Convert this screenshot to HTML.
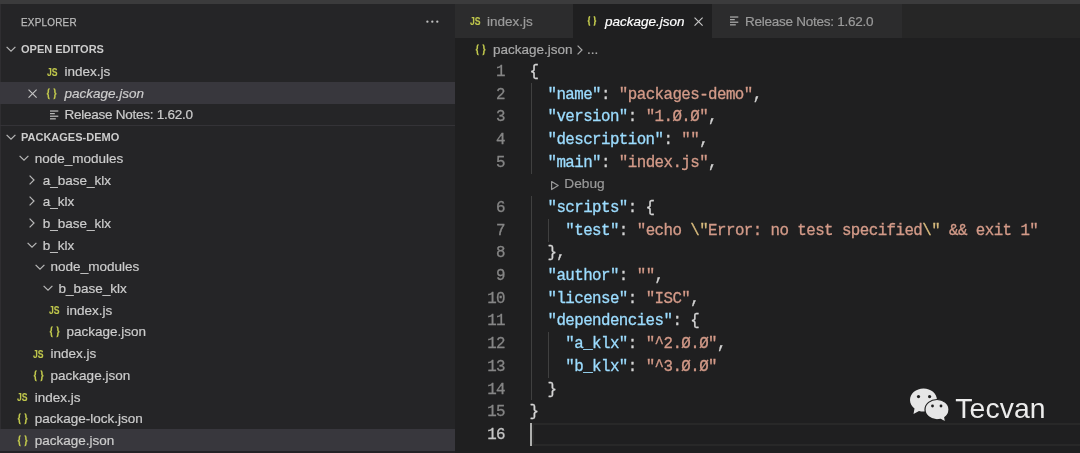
<!DOCTYPE html>
<html><head><meta charset="utf-8">
<style>
*{margin:0;padding:0;box-sizing:border-box}
html,body{width:1080px;height:453px;overflow:hidden;background:#1f1f20}
body{position:relative;font-family:"Liberation Sans",sans-serif;}
.a{position:absolute;white-space:pre}
.t{font-size:13.5px;letter-spacing:0px;color:#cccccc;line-height:16px;-webkit-text-stroke:0.2px currentColor}
.rn{letter-spacing:-0.25px}
.hd{font-size:11px;font-weight:bold;color:#cccccc;line-height:16px}
.js{font-family:"Liberation Sans",sans-serif;font-weight:bold;font-size:10.3px;line-height:11px;color:#bfc64c;transform:scaleX(0.84);transform-origin:0 0;-webkit-text-stroke:0.1px #bfc64c}
.code{-webkit-text-stroke:0.3px currentColor;font-family:"Liberation Mono",monospace;font-size:15.8px;letter-spacing:-0.5570px;line-height:22.69px;color:#d4d4d4}
.ln{-webkit-text-stroke:0.3px currentColor;font-family:"Liberation Mono",monospace;font-size:15.8px;letter-spacing:-0.5570px;line-height:22.69px;color:#858585;text-align:right;width:60px}
.k{color:#9cdcfe}.s{color:#d39a88}.e{color:#d7ba7d}
</style></head><body><div id="root" style="position:absolute;left:0;top:0;width:1080px;height:453px;overflow:hidden;background:#1f1f20;will-change:transform">

<div class="a" style="left:0;top:0;width:1080px;height:4px;background:#3b3b3c"></div>
<div class="a" style="left:0;top:4px;width:455px;height:449px;background:#252527"></div>
<div class="a" style="left:0;top:4px;width:1px;height:449px;background:#2f2e31"></div>
<div class="a" style="left:455px;top:4px;width:625px;height:34px;background:#262626"></div>
<div class="a" style="left:21px;top:14px;font-size:11px;line-height:16px;letter-spacing:0.27px;transform:scaleX(0.9);transform-origin:0 0;-webkit-text-stroke:0.25px currentColor;color:#bbbbbb">EXPLORER</div>
<svg class="a" style="left:424px;top:18px" width="18" height="6" viewBox="0 0 18 6"><circle cx="3.4" cy="3.65" r="1.15" fill="#c0c0c0"/><circle cx="8.3" cy="3.65" r="1.15" fill="#c0c0c0"/><circle cx="13.3" cy="3.65" r="1.15" fill="#c0c0c0"/></svg>
<svg class="a" style="left:2.8px;top:40.8px" width="16" height="16" viewBox="0 0 16 16"><path d="M3.6 5.8 L8 10.2 L12.4 5.8" fill="none" stroke="#b8b8b8" stroke-width="1.2"/></svg>
<div class="a hd" style="left:21px;top:41.4px">OPEN EDITORS</div>
<div class="a js" style="left:46.7px;top:66.5px">JS</div>
<div class="a t" style="left:64.5px;top:64.0px">index.js</div>
<div class="a" style="left:0;top:81.9px;width:455px;height:21.7px;background:#38373d"></div>
<svg class="a" style="left:28px;top:88.5px" width="9.2" height="9.2" viewBox="0 0 10 10"><path d="M0.6 0.6 L9.4 9.4 M9.4 0.6 L0.6 9.4" stroke="#c5c5c5" stroke-width="1.25" fill="none"/></svg>
<svg class="a" style="left:46.4px;top:87.7px" width="12.0" height="12.0" viewBox="0 0 12 12"><path d="M3.6 0.8 C2.6 0.8 2.3 1.3 2.3 2.6 L2.3 4.2 C2.3 5.1 1.9 5.6 0.8 5.7 C1.9 5.8 2.3 6.3 2.3 7.2 L2.3 8.8 C2.3 10.1 2.6 10.6 3.6 10.6 M7.6 0.8 C8.6 0.8 8.9 1.3 8.9 2.6 L8.9 4.2 C8.9 5.1 9.3 5.6 10.4 5.7 C9.3 5.8 8.9 6.3 8.9 7.2 L8.9 8.8 C8.9 10.1 8.6 10.6 7.6 10.6" fill="none" stroke="#bfc64c" stroke-width="1.550"/></svg>
<div class="a t" style="left:64.5px;top:85.7px;font-style:italic">package.json</div>
<svg class="a" style="left:49.8px;top:109.89999999999999px" width="10" height="10" viewBox="0 0 10 10"><rect x="0" y="0.4" width="8.3" height="1.25" fill="#b8b8b8"/><rect x="0" y="3.0" width="4.8" height="1.25" fill="#b8b8b8"/><rect x="0" y="5.6" width="8.3" height="1.25" fill="#b8b8b8"/><rect x="0" y="8.2" width="5.8" height="1.25" fill="#b8b8b8"/></svg>
<div class="a t rn" style="left:64.5px;top:107.39999999999999px">Release Notes: 1.62.0</div>
<div class="a" style="left:0;top:125.3px;width:455px;height:1px;background:#343337"></div>
<svg class="a" style="left:2.8px;top:128.7px" width="16" height="16" viewBox="0 0 16 16"><path d="M3.6 5.8 L8 10.2 L12.4 5.8" fill="none" stroke="#b8b8b8" stroke-width="1.2"/></svg>
<div class="a hd" style="left:21px;top:129.29999999999998px">PACKAGES-DEMO</div>
<svg class="a" style="left:16.299999999999997px;top:150.0px" width="16" height="16" viewBox="0 0 16 16"><path d="M3.6 5.8 L8 10.2 L12.4 5.8" fill="none" stroke="#b8b8b8" stroke-width="1.2"/></svg>
<div class="a t" style="left:34.8px;top:150.8px">node_modules</div>
<svg class="a" style="left:24.199999999999996px;top:171.7px" width="16" height="16" viewBox="0 0 16 16"><path d="M5.6 3.6 L10 8 L5.6 12.4" fill="none" stroke="#b8b8b8" stroke-width="1.2"/></svg>
<div class="a t" style="left:42.699999999999996px;top:172.5px">a_base_klx</div>
<svg class="a" style="left:24.199999999999996px;top:193.4px" width="16" height="16" viewBox="0 0 16 16"><path d="M5.6 3.6 L10 8 L5.6 12.4" fill="none" stroke="#b8b8b8" stroke-width="1.2"/></svg>
<div class="a t" style="left:42.699999999999996px;top:194.20000000000002px">a_klx</div>
<svg class="a" style="left:24.199999999999996px;top:215.1px" width="16" height="16" viewBox="0 0 16 16"><path d="M5.6 3.6 L10 8 L5.6 12.4" fill="none" stroke="#b8b8b8" stroke-width="1.2"/></svg>
<div class="a t" style="left:42.699999999999996px;top:215.9px">b_base_klx</div>
<svg class="a" style="left:24.199999999999996px;top:236.79999999999998px" width="16" height="16" viewBox="0 0 16 16"><path d="M3.6 5.8 L8 10.2 L12.4 5.8" fill="none" stroke="#b8b8b8" stroke-width="1.2"/></svg>
<div class="a t" style="left:42.699999999999996px;top:237.6px">b_klx</div>
<svg class="a" style="left:32.099999999999994px;top:258.5px" width="16" height="16" viewBox="0 0 16 16"><path d="M3.6 5.8 L8 10.2 L12.4 5.8" fill="none" stroke="#b8b8b8" stroke-width="1.2"/></svg>
<div class="a t" style="left:50.599999999999994px;top:259.3px">node_modules</div>
<svg class="a" style="left:40.0px;top:280.2px" width="16" height="16" viewBox="0 0 16 16"><path d="M3.6 5.8 L8 10.2 L12.4 5.8" fill="none" stroke="#b8b8b8" stroke-width="1.2"/></svg>
<div class="a t" style="left:58.5px;top:281.0px">b_base_klx</div>
<div class="a js" style="left:48.70000000000001px;top:305.2px">JS</div>
<div class="a t" style="left:66.4px;top:302.7px">index.js</div>
<svg class="a" style="left:48.50000000000001px;top:326.4px" width="12.0" height="12.0" viewBox="0 0 12 12"><path d="M3.6 0.8 C2.6 0.8 2.3 1.3 2.3 2.6 L2.3 4.2 C2.3 5.1 1.9 5.6 0.8 5.7 C1.9 5.8 2.3 6.3 2.3 7.2 L2.3 8.8 C2.3 10.1 2.6 10.6 3.6 10.6 M7.6 0.8 C8.6 0.8 8.9 1.3 8.9 2.6 L8.9 4.2 C8.9 5.1 9.3 5.6 10.4 5.7 C9.3 5.8 8.9 6.3 8.9 7.2 L8.9 8.8 C8.9 10.1 8.6 10.6 7.6 10.6" fill="none" stroke="#bfc64c" stroke-width="1.550"/></svg>
<div class="a t" style="left:66.4px;top:324.4px">package.json</div>
<div class="a js" style="left:32.9px;top:348.6px">JS</div>
<div class="a t" style="left:50.599999999999994px;top:346.1px">index.js</div>
<svg class="a" style="left:32.699999999999996px;top:369.8px" width="12.0" height="12.0" viewBox="0 0 12 12"><path d="M3.6 0.8 C2.6 0.8 2.3 1.3 2.3 2.6 L2.3 4.2 C2.3 5.1 1.9 5.6 0.8 5.7 C1.9 5.8 2.3 6.3 2.3 7.2 L2.3 8.8 C2.3 10.1 2.6 10.6 3.6 10.6 M7.6 0.8 C8.6 0.8 8.9 1.3 8.9 2.6 L8.9 4.2 C8.9 5.1 9.3 5.6 10.4 5.7 C9.3 5.8 8.9 6.3 8.9 7.2 L8.9 8.8 C8.9 10.1 8.6 10.6 7.6 10.6" fill="none" stroke="#bfc64c" stroke-width="1.550"/></svg>
<div class="a t" style="left:50.599999999999994px;top:367.8px">package.json</div>
<div class="a js" style="left:17.099999999999998px;top:392.0px">JS</div>
<div class="a t" style="left:34.8px;top:389.5px">index.js</div>
<svg class="a" style="left:16.9px;top:413.2px" width="12.0" height="12.0" viewBox="0 0 12 12"><path d="M3.6 0.8 C2.6 0.8 2.3 1.3 2.3 2.6 L2.3 4.2 C2.3 5.1 1.9 5.6 0.8 5.7 C1.9 5.8 2.3 6.3 2.3 7.2 L2.3 8.8 C2.3 10.1 2.6 10.6 3.6 10.6 M7.6 0.8 C8.6 0.8 8.9 1.3 8.9 2.6 L8.9 4.2 C8.9 5.1 9.3 5.6 10.4 5.7 C9.3 5.8 8.9 6.3 8.9 7.2 L8.9 8.8 C8.9 10.1 8.6 10.6 7.6 10.6" fill="none" stroke="#bfc64c" stroke-width="1.550"/></svg>
<div class="a t" style="left:34.8px;top:411.2px">package-lock.json</div>
<div class="a" style="left:0;top:429.09999999999997px;width:455px;height:21.7px;background:#38373d"></div>
<svg class="a" style="left:16.9px;top:434.9px" width="12.0" height="12.0" viewBox="0 0 12 12"><path d="M3.6 0.8 C2.6 0.8 2.3 1.3 2.3 2.6 L2.3 4.2 C2.3 5.1 1.9 5.6 0.8 5.7 C1.9 5.8 2.3 6.3 2.3 7.2 L2.3 8.8 C2.3 10.1 2.6 10.6 3.6 10.6 M7.6 0.8 C8.6 0.8 8.9 1.3 8.9 2.6 L8.9 4.2 C8.9 5.1 9.3 5.6 10.4 5.7 C9.3 5.8 8.9 6.3 8.9 7.2 L8.9 8.8 C8.9 10.1 8.6 10.6 7.6 10.6" fill="none" stroke="#bfc64c" stroke-width="1.550"/></svg>
<div class="a t" style="left:34.8px;top:432.9px">package.json</div>
<div class="a" style="left:0;top:451px;width:455px;height:2px;background:#232226"></div>
<div class="a" style="left:455px;top:4px;width:118px;height:34px;background:#2c2c2d"></div>
<div class="a js" style="left:469.59999999999997px;top:16.2px">JS</div>
<div class="a t" style="left:487px;top:14.3px;color:#9b9b9b">index.js</div>
<div class="a" style="left:573px;top:4px;width:139px;height:34px;background:#1f1f20"></div>
<svg class="a" style="left:587.2px;top:16.2px" width="10.56" height="10.56" viewBox="0 0 12 12"><path d="M3.6 0.8 C2.6 0.8 2.3 1.3 2.3 2.6 L2.3 4.2 C2.3 5.1 1.9 5.6 0.8 5.7 C1.9 5.8 2.3 6.3 2.3 7.2 L2.3 8.8 C2.3 10.1 2.6 10.6 3.6 10.6 M7.6 0.8 C8.6 0.8 8.9 1.3 8.9 2.6 L8.9 4.2 C8.9 5.1 9.3 5.6 10.4 5.7 C9.3 5.8 8.9 6.3 8.9 7.2 L8.9 8.8 C8.9 10.1 8.6 10.6 7.6 10.6" fill="none" stroke="#bfc64c" stroke-width="1.761"/></svg>
<div class="a t" style="left:605px;top:14.3px;color:#ffffff;font-style:italic">package.json</div>
<svg class="a" style="left:693.8px;top:17.2px" width="9.2" height="9.2" viewBox="0 0 10 10"><path d="M0.6 0.6 L9.4 9.4 M9.4 0.6 L0.6 9.4" stroke="#c8c8c8" stroke-width="1.25" fill="none"/></svg>
<div class="a" style="left:712px;top:4px;width:190px;height:34px;background:#2c2c2d"></div>
<svg class="a" style="left:730.2px;top:15.8px" width="10" height="10" viewBox="0 0 10 10"><rect x="0" y="0.4" width="8.3" height="1.25" fill="#aaaaaa"/><rect x="0" y="3.0" width="4.8" height="1.25" fill="#aaaaaa"/><rect x="0" y="5.6" width="8.3" height="1.25" fill="#aaaaaa"/><rect x="0" y="8.2" width="5.8" height="1.25" fill="#aaaaaa"/></svg>
<div class="a t rn" style="left:745px;top:14.3px;color:#9b9b9b">Release Notes: 1.62.0</div>
<svg class="a" style="left:475px;top:43.5px" width="12.0" height="12.0" viewBox="0 0 12 12"><path d="M3.6 0.8 C2.6 0.8 2.3 1.3 2.3 2.6 L2.3 4.2 C2.3 5.1 1.9 5.6 0.8 5.7 C1.9 5.8 2.3 6.3 2.3 7.2 L2.3 8.8 C2.3 10.1 2.6 10.6 3.6 10.6 M7.6 0.8 C8.6 0.8 8.9 1.3 8.9 2.6 L8.9 4.2 C8.9 5.1 9.3 5.6 10.4 5.7 C9.3 5.8 8.9 6.3 8.9 7.2 L8.9 8.8 C8.9 10.1 8.6 10.6 7.6 10.6" fill="none" stroke="#bfc64c" stroke-width="1.550"/></svg>
<div class="a t" style="left:493px;top:42.3px;color:#a9a9a9">package.json</div>
<svg class="a" style="left:572px;top:42px" width="16" height="16" viewBox="0 0 16 16"><path d="M5.6 3.6 L10 8 L5.6 12.4" fill="none" stroke="#a9a9a9" stroke-width="1.2"/></svg>
<div class="a t" style="left:587px;top:42.3px;color:#a9a9a9">...</div>
<div class="a ln" style="left:445px;top:60.9px;color:#858585">1</div>
<div class="a code" style="left:529.6px;top:60.9px">{</div>
<div class="a ln" style="left:445px;top:83.59px;color:#858585">2</div>
<div class="a code" style="left:529.6px;top:83.59px">  <span class="k">"name"</span>: <span class="s">"packages-demo"</span>,</div>
<div class="a ln" style="left:445px;top:106.28px;color:#858585">3</div>
<div class="a code" style="left:529.6px;top:106.28px">  <span class="k">"version"</span>: <span class="s">"1.Ø.Ø"</span>,</div>
<div class="a ln" style="left:445px;top:128.97000000000003px;color:#858585">4</div>
<div class="a code" style="left:529.6px;top:128.97000000000003px">  <span class="k">"description"</span>: <span class="s">""</span>,</div>
<div class="a ln" style="left:445px;top:151.66000000000003px;color:#858585">5</div>
<div class="a code" style="left:529.6px;top:151.66000000000003px">  <span class="k">"main"</span>: <span class="s">"index.js"</span>,</div>
<svg class="a" style="left:550px;top:179.55px" width="10" height="11" viewBox="0 0 10 11"><path d="M1.6 1.5 L8.2 5.5 L1.6 9.5 Z" fill="none" stroke="#999999" stroke-width="1.2" stroke-linejoin="round"/></svg>
<div class="a" style="left:564.3px;top:176.35000000000002px;font-size:13.7px;line-height:16px;-webkit-text-stroke:0.2px currentColor;color:#999999">Debug</div>
<div class="a ln" style="left:445px;top:197.04000000000002px;color:#858585">6</div>
<div class="a code" style="left:529.6px;top:197.04000000000002px">  <span class="k">"scripts"</span>: {</div>
<div class="a ln" style="left:445px;top:219.73000000000002px;color:#858585">7</div>
<div class="a code" style="left:529.6px;top:219.73000000000002px">    <span class="k">"test"</span>: <span class="s">"echo <span class="e">\"</span>Error: no test specified<span class="e">\"</span> &amp;&amp; exit 1"</span></div>
<div class="a ln" style="left:445px;top:242.42000000000002px;color:#858585">8</div>
<div class="a code" style="left:529.6px;top:242.42000000000002px">  },</div>
<div class="a ln" style="left:445px;top:265.11px;color:#858585">9</div>
<div class="a code" style="left:529.6px;top:265.11px">  <span class="k">"author"</span>: <span class="s">""</span>,</div>
<div class="a ln" style="left:445px;top:287.8px;color:#858585">10</div>
<div class="a code" style="left:529.6px;top:287.8px">  <span class="k">"license"</span>: <span class="s">"ISC"</span>,</div>
<div class="a ln" style="left:445px;top:310.49px;color:#858585">11</div>
<div class="a code" style="left:529.6px;top:310.49px">  <span class="k">"dependencies"</span>: {</div>
<div class="a ln" style="left:445px;top:333.18000000000006px;color:#858585">12</div>
<div class="a code" style="left:529.6px;top:333.18000000000006px">    <span class="k">"a_klx"</span>: <span class="s">"^2.Ø.Ø"</span>,</div>
<div class="a ln" style="left:445px;top:355.87000000000006px;color:#858585">13</div>
<div class="a code" style="left:529.6px;top:355.87000000000006px">    <span class="k">"b_klx"</span>: <span class="s">"^3.Ø.Ø"</span></div>
<div class="a ln" style="left:445px;top:378.56000000000006px;color:#858585">14</div>
<div class="a code" style="left:529.6px;top:378.56000000000006px">  }</div>
<div class="a ln" style="left:445px;top:401.25000000000006px;color:#858585">15</div>
<div class="a code" style="left:529.6px;top:401.25000000000006px">}</div>
<div class="a ln" style="left:445px;top:423.94000000000005px;color:#c6c6c6">16</div>
<div class="a code" style="left:529.6px;top:423.94000000000005px"></div>
<div class="a" style="left:530.6px;top:82.79px;width:1px;height:90.76px;background:#404040"></div>
<div class="a" style="left:530.6px;top:196.24px;width:1px;height:204.21000000000004px;background:#404040"></div>
<div class="a" style="left:548.446px;top:218.93px;width:1px;height:22.689999999999998px;background:#404040"></div>
<div class="a" style="left:548.446px;top:332.38000000000005px;width:1px;height:45.379999999999995px;background:#404040"></div>
<div class="a" style="left:532px;top:423.14000000000004px;width:548px;height:22.69px;border:2px solid #282828;border-right:none"></div>
<div class="a" style="left:530px;top:423.14000000000004px;width:2px;height:22.69px;background:#aeafad"></div>
<svg class="a" style="left:908px;top:387px" width="42" height="36" viewBox="0 0 42 36">
<path d="M15.5 1.5 C8 1.5 2 6.5 2 13 C2 16.5 3.8 19.5 6.5 21.5 L5.5 27 L11 24 C12.5 24.4 14 24.6 15.5 24.6 C23 24.6 29 19.5 29 13 C29 6.5 23 1.5 15.5 1.5 Z" fill="#e6e6e6"/>
<circle cx="10.5" cy="9.6" r="1.6" fill="#1e1e1e"/><circle cx="21.6" cy="9.6" r="1.6" fill="#1e1e1e"/>
<path d="M29 12.5 C22.5 12.5 17 16.8 17 22.5 C17 28.2 22.5 32.8 29 32.8 C30.3 32.8 31.5 32.6 32.6 32.3 L37.5 35 L36.8 30.5 C39.3 28.6 41 25.8 41 22.5 C41 16.8 35.5 12.5 29 12.5 Z" fill="#e6e6e6" stroke="#1e1e1e" stroke-width="1.2"/>
<circle cx="24.5" cy="19" r="1.4" fill="#1e1e1e"/><circle cx="33" cy="19" r="1.4" fill="#1e1e1e"/>
</svg>
<div class="a" style="left:955.3px;top:392.4px;font-size:28.3px;letter-spacing:0.1px;line-height:32px;color:#ececec">Tecvan</div>
</div></body></html>
